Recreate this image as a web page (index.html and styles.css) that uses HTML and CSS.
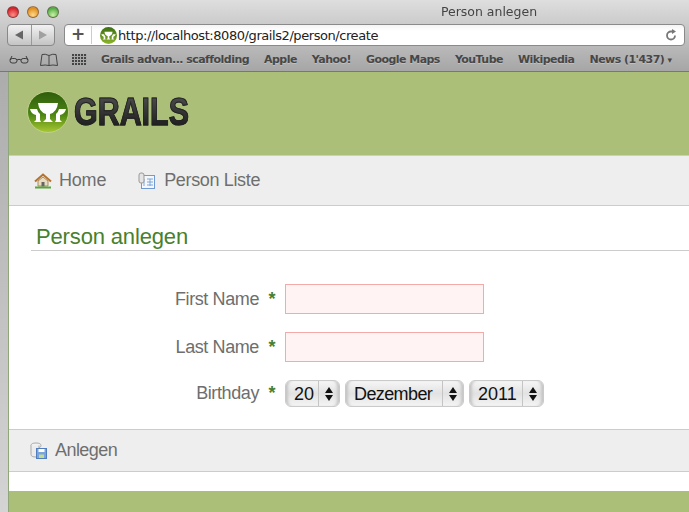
FILE: index.html
```html
<!DOCTYPE html>
<html lang="de">
<head>
    <meta charset="UTF-8">
    <title>Person anlegen</title>
    <link rel="stylesheet" href="styles.css">
</head>
<body>
    <!-- Browser oben -->
    <div class="chrome">
        <div class="titlebar">
            <div class="lights">
                <span class="light red"></span>
                <span class="light amber"></span>
                <span class="light green"></span>
            </div>
            <div class="window-title">Person anlegen</div>
        </div>
        <div class="toolbar">
            <div class="nav-buttons">
                <span class="nav-btn"><svg width="12" height="12" viewBox="0 0 12 12"><path d="M10 1.500v9L2 6z" fill="#666"/></svg></span>
                <span class="nav-btn"><svg width="12" height="12" viewBox="0 0 12 12"><path d="M2 1.500v9l8-4.500z" fill="#a0a0a0"/></svg></span>
            </div>
            <div class="address">
                <span class="plus">+</span>
                <svg class="favicon" width="17" height="17" viewBox="0 0 42 42">
                    <defs>
                        <linearGradient id="fav" x1="0" y1="0" x2="0" y2="1">
                            <stop offset="0" stop-color="#3a6c12"/>
                            <stop offset="1" stop-color="#8fb52a"/>
                        </linearGradient>
                    </defs>
                    <circle cx="21" cy="21" r="21" fill="url(#fav)"/>
                    <path d="M11 12h20q-1 9-8 11v5l3 3H16l3-3v-5q-7-2-8-11z" fill="#fff"/>
                    <path d="M3 18h7q1 4 3 5v6l1 2H7l2-2v-5q-5-1-6-6zM39 18h-7q-1 4-3 5v6l-1 2h7l-2-2v-5q5-1 6-6z" fill="#fff"/>
                </svg>
                <span class="url">http://localhost:8080/grails2/person/create</span>
                <svg class="reload" width="12" height="12" viewBox="0 0 12 12"><path d="M10 6.500A4 4 0 1 1 6 2.500h2" fill="none" stroke="#777" stroke-width="1.800"/><path d="M7 0l4 2.500L7 5z" fill="#777"/></svg>
            </div>
        </div>
        <div class="bookmarks">
            <svg class="bm-icon" width="20" height="10" viewBox="0 0 20 10"><g fill="none" stroke="#3a3a3a"><rect x="1" y="4.500" width="7" height="4.500" rx="2.200"/><rect x="12" y="4.500" width="7" height="4.500" rx="2.200"/><path d="M8 6q2-1.500 4 0M1 6l2-4M19 6l-2-4"/></g></svg>
            <svg class="bm-icon book" width="18" height="13" viewBox="0 0 18 13"><path d="M9 2.500Q5 .500 2 1.500L.500 12.500q5-1 8.500 0q3.500-1 8.500 0L16 1.500q-3-1-7 1zv10" fill="none" stroke="#444"/></svg>
            <span class="bm-grid"></span>
            <a class="bm">Grails advan... scaffolding</a>
            <a class="bm">Apple</a>
            <a class="bm">Yahoo!</a>
            <a class="bm">Google Maps</a>
            <a class="bm">YouTube</a>
            <a class="bm">Wikipedia</a>
            <a class="bm">News (1'437) <span class="caret">▾</span></a>
        </div>
    </div>

    <!-- Seite -->
    <div class="page">
        <div class="logo-bar">
            <svg class="logo-mark" width="42" height="42" viewBox="0 0 42 42">
                <defs>
                    <linearGradient id="ball" x1="0" y1="0" x2="0" y2="1">
                        <stop offset="0" stop-color="#2f5c0c"/>
                        <stop offset="0.55" stop-color="#4a8412"/>
                        <stop offset="1" stop-color="#a8c832"/>
                    </linearGradient>
                </defs>
                <circle cx="21" cy="21" r="20.500" fill="url(#ball)" stroke="#c0d08c"/>
                <path d="M11 12h20q-1 9-8 11v5l3 3H16l3-3v-5q-7-2-8-11z" fill="#fff"/>
                <path d="M3 18h7q1 4 3 5v6l1 2H7l2-2v-5q-5-1-6-6zM39 18h-7q-1 4-3 5v6l-1 2h7l-2-2v-5q5-1 6-6z" fill="#fff"/>
            </svg>
            <span class="logo-text">GRAILS</span>
        </div>
        <div class="nav">
            <a class="nav-link home">
                <svg width="18" height="16" viewBox="0 0 18 16"><path d="M4 8l5-4 5 4v5H4z" fill="#e9dcc0" stroke="#a98d60"/><path d="M1 8.500l8-7 8 7" fill="none" stroke="#b5722c" stroke-width="2"/><rect x="7.500" y="9" width="3" height="4.500" fill="#666"/><rect x="1" y="13.500" width="16" height="2" fill="#5aa53a"/></svg>
                Home
            </a>
            <a class="nav-link list">
                <svg width="17" height="17" viewBox="0 0 17 17"><rect x="3.500" y="3.500" width="13" height="13" fill="#f4f8fd" stroke="#6f9bd2"/><path d="M9 7h6M9 10h6M9 13h6M12 7v7M6 7v7" stroke="#7fa5d5"/><rect x="1" y="1" width="5" height="10" rx="2" fill="#e4e4e4" stroke="#999"/></svg>
                Person Liste
            </a>
        </div>
        <div class="content">
            <h1>Person anlegen</h1>
            <form class="person-form">
                <div class="row">
                    <label>First Name</label><span class="req">*</span>
                    <input class="text-input" type="text">
                </div>
                <div class="row">
                    <label>Last Name</label><span class="req">*</span>
                    <input class="text-input" type="text">
                </div>
                <div class="row date-row">
                    <label>Birthday</label><span class="req">*</span>
                    <div class="selects">
                        <span class="select day">20<i class="arrows"></i></span>
                        <span class="select month">Dezember<i class="arrows"></i></span>
                        <span class="select year">2011<i class="arrows"></i></span>
                    </div>
                </div>
            </form>
        </div>
        <div class="buttons">
            <a class="nav-link save">
                <svg width="17" height="17" viewBox="0 0 17 17"><ellipse cx="6" cy="3.500" rx="5" ry="2.500" fill="#f2f2f2" stroke="#aaa"/><path d="M1 3.500v9q0 2.500 5 2.500h3V3.500" fill="#ececec" stroke="#aaa"/><rect x="6.500" y="6.500" width="10" height="10" fill="#7ba3dc" stroke="#4f7dbd"/><rect x="8.500" y="7" width="6" height="3" fill="#fff"/><rect x="9" y="12.500" width="5" height="3.500" fill="#c2dc8a"/></svg>
                Anlegen
            </a>
        </div>
        <div class="gap"></div>
        <div class="footer"></div>
    </div>
</body>
</html>
```

FILE: styles.css
```css
html, body {
    margin: 0;
    height: 512px;
    overflow: hidden;
}
body {
    font-family: "Liberation Sans", Arial, sans-serif;
    background: linear-gradient(#a6a6a6, #d4d4d4);
    color: #6e6e6e;
}

/* Browser */
.chrome {
    height: 71px;
    background: linear-gradient(#dedede, #a6a6a6);
    border-bottom: 1px solid #777;
}
.titlebar {
    height: 23px;
    display: flex;
    align-items: center;
    position: relative;
}
.lights {
    display: flex;
    gap: 8px;
    padding-left: 7px;
}
.light {
    width: 12px;
    height: 12px;
    border-radius: 50%;
    border: 1px solid rgba(90, 60, 60, .55);
    box-sizing: border-box;
}
.red { background: radial-gradient(circle at 50% 80%, #ff8f88, #d4262c 70%); }
.amber { background: radial-gradient(circle at 50% 80%, #ffd98a, #e09020 70%); }
.green { background: radial-gradient(circle at 50% 80%, #c8f4a4, #58ac48 70%); }
.window-title {
    position: absolute;
    left: 289px;
    width: 400px;
    text-align: center;
    font: 13px "DejaVu Sans", sans-serif;
    color: #444;
    transform: scaleX(.96);
}
.toolbar {
    height: 24px;
    display: flex;
    align-items: center;
    gap: 9px;
    padding-left: 7px;
    padding-right: 4px;
}
.nav-buttons {
    display: flex;
    width: 46px;
    height: 20px;
    border: 1px solid #888;
    border-radius: 4px;
    background: linear-gradient(#f2f2f2, #c4c4c4);
}
.nav-btn {
    flex: 1;
    display: flex;
    align-items: center;
    justify-content: center;
}
.nav-btn + .nav-btn {
    border-left: 1px solid #999;
}
.address {
    flex: 1;
    height: 20px;
    display: flex;
    align-items: center;
    background: linear-gradient(#f4f4f4, #fff 30%);
    border: 1px solid #8a8a8a;
    border-radius: 4px;
}
.plus {
    width: 26px;
    text-align: center;
    font: bold 17px "DejaVu Sans", sans-serif;
    color: #555;
    border-right: 1px solid #ccc;
    height: 18px;
    line-height: 17px;
}
.favicon {
    margin-left: 8px;
    margin-right: 1px;
}
.url {
    flex: 1;
    font: 13px "DejaVu Sans", sans-serif;
    color: #222;
    letter-spacing: -.43px;
}
.reload {
    margin-right: 7px;
}
.bookmarks {
    height: 24px;
    display: flex;
    align-items: center;
    padding-left: 9px;
    white-space: nowrap;
}
.bm-icon {
    margin-right: 11px;
}
.bm-icon.book {
    margin-right: 14px;
}
.bm-grid {
    width: 15px;
    height: 11px;
    margin-right: -1px;
    background:
        repeating-linear-gradient(90deg, transparent 0 2px, #a9a9a9 2px 3px),
        repeating-linear-gradient(#444 0 2px, #a9a9a9 2px 3px);
}
.bm {
    font: bold 11px "DejaVu Sans", sans-serif;
    color: #474747;
    margin-left: 15px;
    letter-spacing: -.54px;
    text-shadow: 0 1px 0 rgba(255, 255, 255, .25);
}
.caret {
    font-size: 9px;
}

/* Seite */
.page {
    height: 440px;
    margin-left: 8px;
    border-left: 1px solid #8fa67a;
    display: flex;
    flex-direction: column;
    background-color: #fff;
}
.logo-bar {
    height: 83px;
    background-color: #abbf78;
    display: flex;
    align-items: center;
    padding-left: 18px;
    padding-bottom: 4px;
    box-sizing: border-box;
}
.logo-text {
    font: bold 39px "Liberation Sans", sans-serif;
    background: linear-gradient(#555, #141414);
    -webkit-background-clip: text;
    background-clip: text;
    color: transparent;
    -webkit-text-stroke: 1px #222;
    transform: scaleX(.78);
    transform-origin: left center;
    margin-left: 5px;
}
.nav {
    height: 49px;
    background-color: #eee;
    border-top: 1px solid #ccc;
    border-bottom: 1px solid #ccc;
    display: flex;
    align-items: center;
    padding-left: 25px;
    gap: 32px;
}
.nav-link {
    display: flex;
    align-items: center;
    gap: 7px;
    font-size: 18px;
    color: #6e6e6e;
    letter-spacing: -.35px;
}
.nav-link.home {
    letter-spacing: -.2px;
}
.nav-link.list {
    gap: 9px;
}
.nav-link.save {
    gap: 8px;
    letter-spacing: -.55px;
}
.content {
    flex: 1;
    padding-left: 22px;
}
h1 {
    margin: 18px 0 0;
    padding: 0 0 0 5px;
    font-size: 22px;
    font-weight: normal;
    line-height: 26px;
    letter-spacing: -.15px;
    color: #48802c;
    border-bottom: 1px solid #ccc;
    height: 26px;
}
.person-form {
    padding-top: 33px;
}
.row {
    display: flex;
    align-items: center;
    height: 30px;
    margin-bottom: 18px;
}
.row label {
    width: 228px;
    text-align: right;
    font-size: 18px;
    letter-spacing: -.4px;
    color: #6e6e6e;
}
.req {
    width: 26px;
    text-align: center;
    color: #48802c;
    font-size: 18px;
    font-weight: bold;
}
.text-input {
    width: 199px;
    height: 30px;
    box-sizing: border-box;
    border: 1px solid #f5aaaa;
    background-color: #fff3f3;
    margin: 0;
    padding: 0;
}
.date-row {
    height: 27px;
    margin-bottom: 0;
}
.selects {
    display: flex;
    gap: 5px;
}
.select {
    position: relative;
    height: 27px;
    line-height: 26px;
    box-sizing: border-box;
    border: 1px solid #cacaca;
    border-radius: 6px;
    background: linear-gradient(#f6f6f6, #e2e2e2 50%, #f4f4f4);
    box-shadow: inset 4px 0 3px -2px #c4c4c4, inset -4px 0 3px -2px #c4c4c4;
    color: #111;
    font-size: 18px;
    padding-left: 8px;
}
.select::after {
    content: "";
    position: absolute;
    top: 0;
    bottom: 0;
    right: 20px;
    border-left: 1px solid #c4c4c4;
}
.arrows {
    position: absolute;
    right: 6px;
    top: 6px;
    width: 8px;
    height: 14px;
}
.arrows::before, .arrows::after {
    content: "";
    position: absolute;
    left: 0;
    border-left: 4px solid transparent;
    border-right: 4px solid transparent;
}
.arrows::before {
    top: 0;
    border-bottom: 6px solid #111;
}
.arrows::after {
    bottom: 0;
    border-top: 6px solid #111;
}
.day { width: 55px; }
.month { width: 119px; letter-spacing: -.6px; }
.year { width: 75px; }
.buttons {
    height: 41px;
    background-color: #eee;
    border-top: 1px solid #ccc;
    border-bottom: 1px solid #ccc;
    display: flex;
    align-items: center;
    padding-left: 21px;
}
.gap {
    height: 19px;
}
.footer {
    height: 21px;
    background-color: #abbf78;
}
```
